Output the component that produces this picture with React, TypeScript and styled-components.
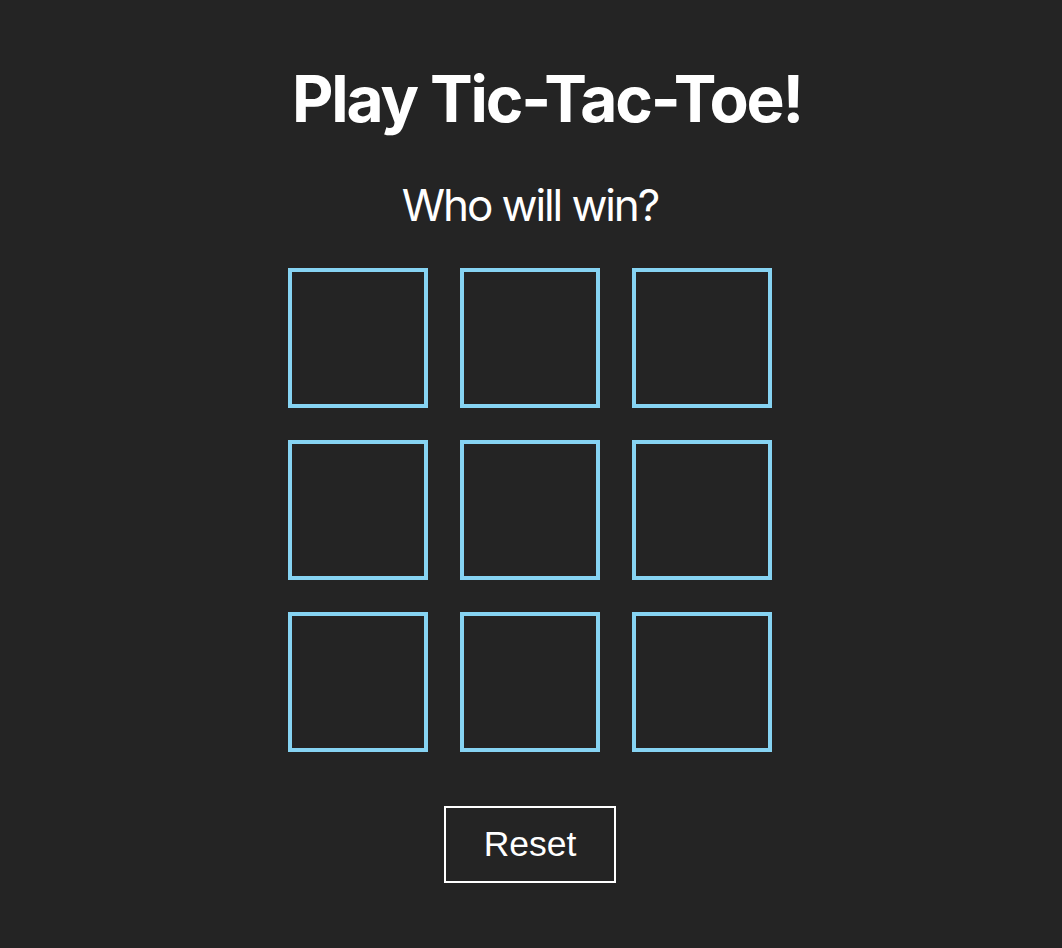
import React from "react";
import styled, { createGlobalStyle } from "styled-components";

const Global = createGlobalStyle`
  html, body {
    margin: 0;
    padding: 0;
    background: #242424;
  }
  body {
    min-height: 948px;
    font-family: Inter, "Noto Sans", sans-serif;
    color: #ffffff;
  }
`;

const Page = styled.main`
  display: flex;
  flex-direction: column;
  align-items: center;
  padding-top: 60px;
`;

const Title = styled.h1`
  margin: 0;
  font-family: Inter, sans-serif;
  font-weight: 700;
  font-size: 64px;
  line-height: 78px;
  letter-spacing: -2.1px;
  color: #ffffff;
  padding-left: 32px;
`;

const Subtitle = styled.p`
  margin: 40px 2px 0 0;
  font-family: Inter, sans-serif;
  font-weight: 400;
  font-size: 44px;
  line-height: 54px;
  letter-spacing: -2.1px;
  color: #ffffff;
`;

const Board = styled.div`
  margin: 36px 2px 0 0;
  display: grid;
  grid-template-columns: repeat(3, 140px);
  grid-auto-rows: 140px;
  gap: 32px;
`;

const Cell = styled.button`
  box-sizing: border-box;
  width: 140px;
  height: 140px;
  background: transparent;
  border: 4px solid #86d3f2;
  padding: 0;
  cursor: pointer;
`;

const ResetButton = styled.button`
  box-sizing: border-box;
  margin: 54px 2px 0 0;
  width: 172px;
  height: 77px;
  background: transparent;
  border: 2px solid #ffffff;
  color: #ffffff;
  font-family: "Liberation Sans", Arial, sans-serif;
  font-size: 35.5px;
  padding: 0;
  cursor: pointer;
`;

export default function App() {
  const cells = Array.from({ length: 9 }, (_, i) => i);
  return (
    <>
      <Global />
      <Page>
        <Title>Play Tic-Tac-Toe!</Title>
        <Subtitle>Who will win?</Subtitle>
        <Board>
          {cells.map((i) => (
            <Cell key={i} aria-label={`cell ${i + 1}`} />
          ))}
        </Board>
        <ResetButton>Reset</ResetButton>
      </Page>
    </>
  );
}
